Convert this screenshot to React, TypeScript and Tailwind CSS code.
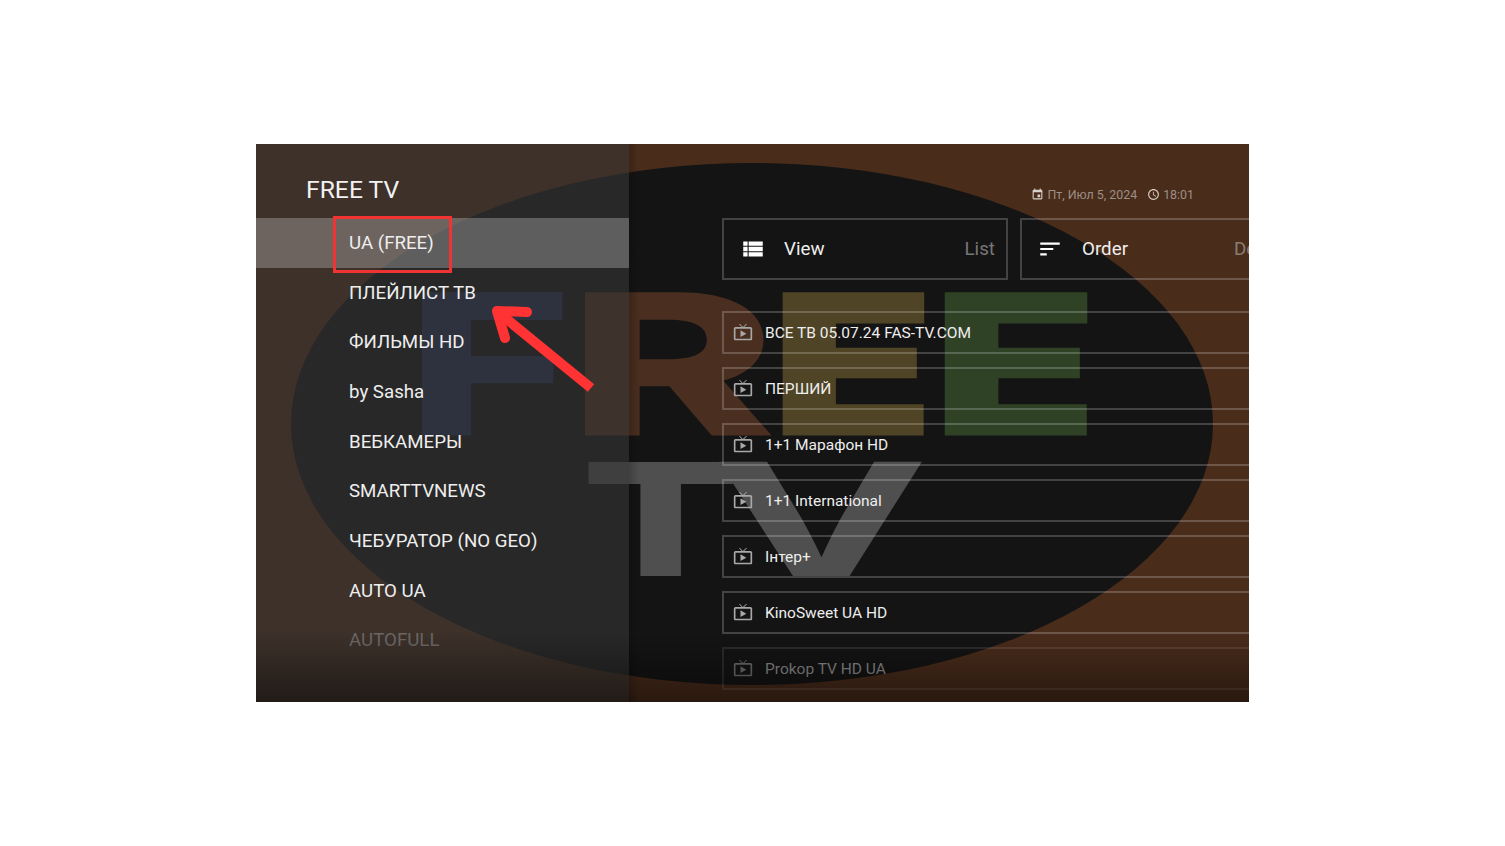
import { MdViewList, MdSort, MdOutlineLiveTv, MdEvent, MdAccessTime } from 'react-icons/md'

const menu = ['UA (FREE)', 'ПЛЕЙЛИСТ ТВ', 'ФИЛЬМЫ HD', 'by Sasha', 'ВЕБКАМЕРЫ', 'SMARTTVNEWS', 'ЧЕБУРАТОР (NO GEO)', 'AUTO UA', 'AUTOFULL']

const channels = ['ВСЕ ТВ 05.07.24 FAS-TV.COM', 'ПЕРШИЙ', '1+1 Марафон HD', '1+1 International', 'Інтер+', 'KinoSweet UA HD', 'Prokop TV HD UA']

function LogoLetter({ ch, x, y, sx, size, fill, weight = 900 }: { ch: string; x: number; y: number; sx: number; size: number; fill: string; weight?: number }) {
  return (
    <text transform={`translate(${x} ${y}) scale(${sx} 1)`} fontSize={size} fontWeight={weight} fontFamily="Inter, sans-serif" fill={fill}>
      {ch}
    </text>
  )
}

function Backdrop() {
  return (
    <svg className="absolute inset-0 w-full h-full" viewBox="0 0 993 558">
      <rect width="993" height="558" fill="#4a2c1b" />
      <ellipse cx="496" cy="280" rx="461" ry="261" fill="#141414" />
      <LogoLetter ch="F" x={150} y={291.5} sx={1.44} size={197} fill="#232f4f" weight={800} />
      <LogoLetter ch="R" x={311} y={291.5} sx={1.61} size={197} fill="#4a2e1f" weight={800} />
      <LogoLetter ch="E" x={514} y={291.5} sx={1.37} size={197} fill="#4f4426" />
      <LogoLetter ch="E" x={676} y={291.5} sx={1.38} size={197} fill="#2f4226" />
      <LogoLetter ch="T" x={325} y={432} sx={1.5} size={157} fill="#4f4f4f" weight={800} />
      <LogoLetter ch="V" x={456} y={432} sx={1.85} size={157} fill="#4f4f4f" weight={700} />
    </svg>
  )
}

export default function App() {
  return (
    <div className="min-h-screen bg-white pt-[144px] pl-[256px] font-['Roboto',sans-serif]">
      <div className="relative w-[993px] h-[558px] overflow-hidden">
        <Backdrop />

        <div className="relative flex h-full">
          {/* Categories */}
          <aside className="w-[373px] shrink-0 bg-[#363636]/60">
            <h1 className="h-[74px] pl-[50px] pt-[29px] text-[24.7px] leading-[34px] text-[#f2f2f2]">FREE TV</h1>
            {menu.map((item, i) => (
              <div
                key={item}
                className={`flex h-[49.7px] items-center pl-[93px] text-[18.7px] ${i === 0 ? 'bg-white/25 text-[#eeeeee]' : i === 8 ? 'text-[#6b6865]' : 'text-[#eeeeee]'}`}
              >
                {item}
              </div>
            ))}
          </aside>

          <div className="w-[10px] shrink-0 bg-gradient-to-r from-black/20 to-transparent" />

          {/* Channels */}
          <main className="min-w-0 flex-1 pl-[83px]">
            <div className="flex h-[74px] items-center justify-end gap-[10px] pr-[55px] pt-[28px] text-[12.4px] text-[#9c8f86]">
              <span className="flex items-center gap-[3px]">
                <MdEvent className="h-[13px] w-[13px] text-[#d8d0ca]" />
                Пт, Июл 5, 2024
              </span>
              <span className="flex items-center gap-[3px]">
                <MdAccessTime className="h-[13px] w-[13px] text-[#d8d0ca]" />
                18:01
              </span>
            </div>

            <div className="flex gap-[12px]">
              <div className="flex h-[62px] w-[286px] shrink-0 items-center border-2 border-white/20 pl-[16px] pr-[11px] text-[18.8px] text-[#eeeeee]">
                <MdViewList className="h-[26px] w-[26px] shrink-0 text-white" />
                <span className="ml-[18px] flex-1">View</span>
                <span className="text-[#777777]">List</span>
              </div>
              <div className="flex h-[62px] w-[287px] shrink-0 items-center border-2 border-white/20 pl-[15px] pr-[11px] text-[18.8px] text-[#eeeeee]">
                <MdSort className="h-[26px] w-[26px] shrink-0 text-white" />
                <span className="ml-[19px] flex-1">Order</span>
                <span className="text-[#8a7d74]">Default</span>
              </div>
            </div>

            <div className="mt-[31px] flex w-[600px] flex-col gap-[13px]">
              {channels.map((name, i) => (
                <div
                  key={name}
                  className={`flex h-[43px] items-center border-2 pl-[9px] text-[15.5px] ${i === 6 ? 'border-white/10 text-[#8c8c8c]' : 'border-white/20 text-[#eeeeee]'}`}
                >
                  <MdOutlineLiveTv className={`mb-[2px] h-[20px] w-[20px] shrink-0 ${i === 6 ? 'text-[#6e6e6e]' : 'text-[#a8a8a8]'}`} />
                  <span className="ml-[12px] pt-[2px]">{name}</span>
                </div>
              ))}
            </div>
          </main>
        </div>

        {/* Fade at the bottom edge */}
        <div className="absolute inset-x-0 bottom-0 h-[70px] bg-gradient-to-b from-transparent to-black/45" />

        {/* Annotation box and arrow */}
        <div className="absolute left-[77px] top-[72px] h-[57px] w-[119px] border-[3px] border-[#f13333]" />
        <svg className="absolute left-[230px] top-[155px] h-[100px] w-[120px]" viewBox="0 0 120 100" fill="none">
          <path d="M105 89 L12 13" stroke="#ff3333" strokeWidth="10" />
          <path d="M41 13 L11 12 L19 39" stroke="#ff3333" strokeWidth="10" strokeLinecap="round" strokeLinejoin="round" />
        </svg>
      </div>
    </div>
  )
}
